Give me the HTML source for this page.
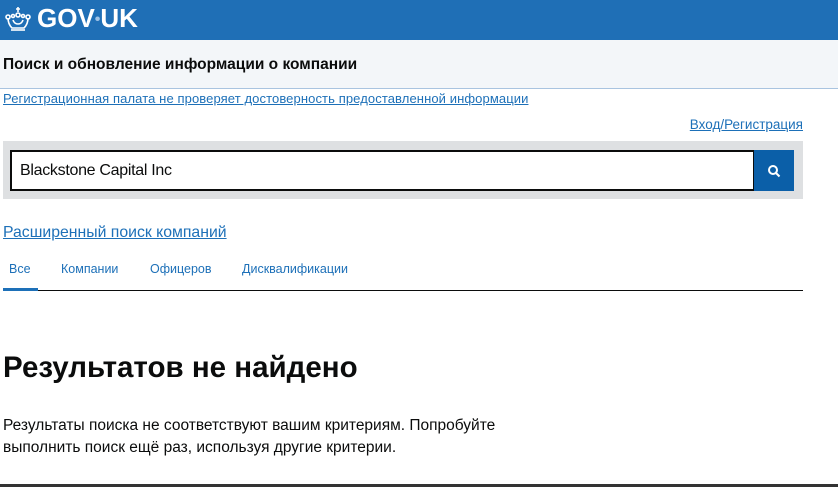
<!DOCTYPE html>
<html><head><meta charset="utf-8"><style>
*{margin:0;padding:0;box-sizing:border-box}
body{width:838px;height:487px;overflow:hidden;background:#fff;font-family:"Liberation Sans",Arial,sans-serif;color:#0b0c0c;position:relative}
.hdr{position:absolute;left:0;top:0;width:838px;height:40px;background:#1f6fb6}
.logo{position:absolute;left:37px;top:3px;color:#fff;font-weight:bold;font-size:26px}
.band{position:absolute;left:0;top:40px;width:838px;height:49px;background:#f3f6f9;border-bottom:1px solid #a9c4e0}
.title{position:absolute;left:3px;top:56px;font-size:15.5px;font-weight:bold;white-space:nowrap}
a{color:#1d70b8;text-decoration:underline;white-space:nowrap}
.l1{position:absolute;left:3px;top:91px;font-size:13px;letter-spacing:0.1px}
.l2{position:absolute;right:35px;top:117px;font-size:13.5px}
.sb{position:absolute;left:3px;top:141px;width:800px;height:58px;background:#dee0e2}
.inp{position:absolute;left:10px;top:150px;width:745px;height:41px;border:2px solid #0b0c0c;background:#fff;font-size:16px;padding:10px 8px;letter-spacing:-0.3px}
.btn{position:absolute;left:754px;top:150px;width:40px;height:41px;background:#0b5fa8}
.adv{position:absolute;left:3px;top:224px;font-size:15.8px}
.tabs{position:absolute;left:3px;top:262px;font-size:12.5px;color:#1d70b8}
.tabs span{position:absolute;white-space:nowrap}
.line{position:absolute;left:3px;top:290px;width:800px;height:1px;background:#0b0c0c}
.act{position:absolute;left:3px;top:288px;width:35px;height:3px;background:#1d70b8}
h1{position:absolute;left:3px;top:351px;font-size:29.5px;font-weight:bold;white-space:nowrap}
p{position:absolute;left:3px;top:415px;font-size:15.5px;line-height:22px;white-space:nowrap}
.bot{position:absolute;left:0;top:484px;width:838px;height:3px;background:#333}
</style></head><body>
<div class="hdr">
<svg style="position:absolute;left:4px;top:6px" width="28" height="26" viewBox="0 0 28 26" fill="none" stroke="#fff" stroke-width="1.6">
<path d="M14 1v5M12 3h4"/><circle cx="14" cy="9" r="2"/><path d="M4 12c0 5 2 8 4 10h12c2-2 4-5 4-10"/><circle cx="4" cy="11" r="2"/><circle cx="24" cy="11" r="2"/><circle cx="9" cy="10" r="1.5"/><circle cx="19" cy="10" r="1.5"/><path d="M7 24h14"/><path d="M9 14c1 3 3 4 5 4s4-1 5-4"/></svg>
<div class="logo">GOV<span style="color:#9fc3e6;font-size:16px;vertical-align:3px">•</span>UK</div>
</div>
<div class="band"></div>
<div class="title">Поиск и обновление информации о компании</div>
<a class="l1">Регистрационная палата не проверяет достоверность предоставленной информации</a>
<a class="l2">Вход/Регистрация</a>
<div class="sb"></div>
<div class="inp">Blackstone Capital Inc</div>
<div class="btn"><svg style="position:absolute;left:13px;top:14px" width="14" height="14" viewBox="0 0 14 14" fill="none" stroke="#fff" stroke-width="2"><circle cx="6" cy="6" r="4"/><path d="M9 9l3.5 3.5"/></svg></div>
<a class="adv">Расширенный поиск компаний</a>
<div class="tabs"><span style="left:6px">Все</span><span style="left:58px">Компании</span><span style="left:147px">Офицеров</span><span style="left:239px">Дисквалификации</span></div>
<div class="line"></div><div class="act"></div>
<h1>Результатов не найдено</h1>
<p>Результаты поиска не соответствуют вашим критериям. Попробуйте<br>выполнить поиск ещё раз, используя другие критерии.</p>
<div class="bot"></div>
</body></html>
